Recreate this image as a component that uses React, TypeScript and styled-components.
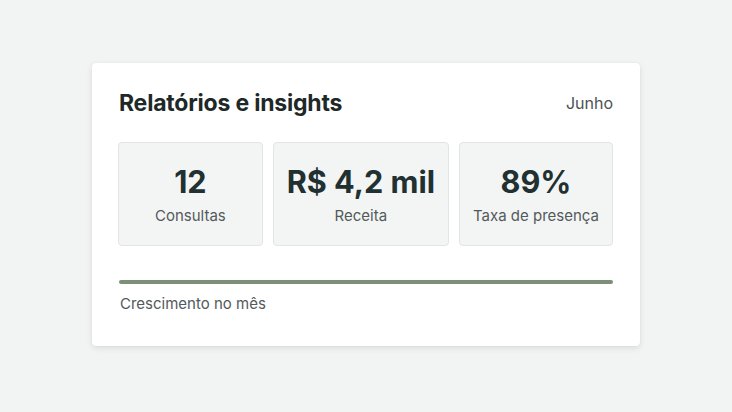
import React from "react";
import styled, { createGlobalStyle } from "styled-components";

const Global = createGlobalStyle`
  html, body { margin: 0; padding: 0; background: #f2f3f3; }
  body { font-family: Inter, "Noto Sans", sans-serif; }
`;

const Page = styled.div`
  min-height: 412px;
  display: flex;
  align-items: center;
  justify-content: center;
  padding-bottom: 3px;
  box-sizing: border-box;
`;

const Card = styled.section`
  width: 548px;
  height: 283px;
  box-sizing: border-box;
  background: #ffffff;
  border-radius: 4px;
  box-shadow: 0 2px 6px rgba(0, 0, 0, 0.10), 0 0 1px rgba(0, 0, 0, 0.08);
  padding: 26px 27px 28px 26px;
  display: flex;
  flex-direction: column;
`;

const Header = styled.div`
  display: flex;
  align-items: center;
  justify-content: space-between;
  height: 28px;
`;

const Title = styled.h2`
  margin: 0 0 0 1px;
  font-size: 23px;
  font-weight: 700;
  color: #1e2828;
  letter-spacing: -0.2px;
`;

const Period = styled.span`
  font-size: 16px;
  color: #4b5252;
`;

const Stats = styled.div`
  display: flex;
  gap: 10px;
  margin-top: 25px;
`;

const StatBox = styled.div`
  flex: 1 1 0;
  padding: 0 13px;
  height: 104px;
  box-sizing: border-box;
  background: #f3f5f5;
  border: 1px solid #e2e5e5;
  border-radius: 4px;
  display: flex;
  flex-direction: column;
  align-items: center;
  justify-content: center;
  white-space: nowrap;
`;

const Value = styled.div`
  font-size: 30.6px;
  font-weight: 700;
  color: #213030;
  line-height: 38px;
`;

const Label = styled.div`
  font-size: 15px;
  color: #535a5a;
  line-height: 20px;
  margin-top: 5px;
`;

const Bar = styled.div`
  margin-top: 34px;
  margin-left: 1px;
  height: 4px;
  border-radius: 2px;
  background: #7e8f78;
`;

const Caption = styled.div`
  margin: 10px 0 0 2px;
  font-size: 15px;
  color: #535a5a;
  line-height: 20px;
`;

const stats = [
  { value: "12", label: "Consultas" },
  { value: "R$ 4,2 mil", label: "Receita" },
  { value: "89%", label: "Taxa de presença" },
];

export default function App() {
  return (
    <>
      <Global />
      <Page>
        <Card>
          <Header>
            <Title>Relatórios e insights</Title>
            <Period>Junho</Period>
          </Header>
          <Stats>
            {stats.map((s) => (
              <StatBox key={s.label}>
                <Value>{s.value}</Value>
                <Label>{s.label}</Label>
              </StatBox>
            ))}
          </Stats>
          <Bar />
          <Caption>Crescimento no mês</Caption>
        </Card>
      </Page>
    </>
  );
}
